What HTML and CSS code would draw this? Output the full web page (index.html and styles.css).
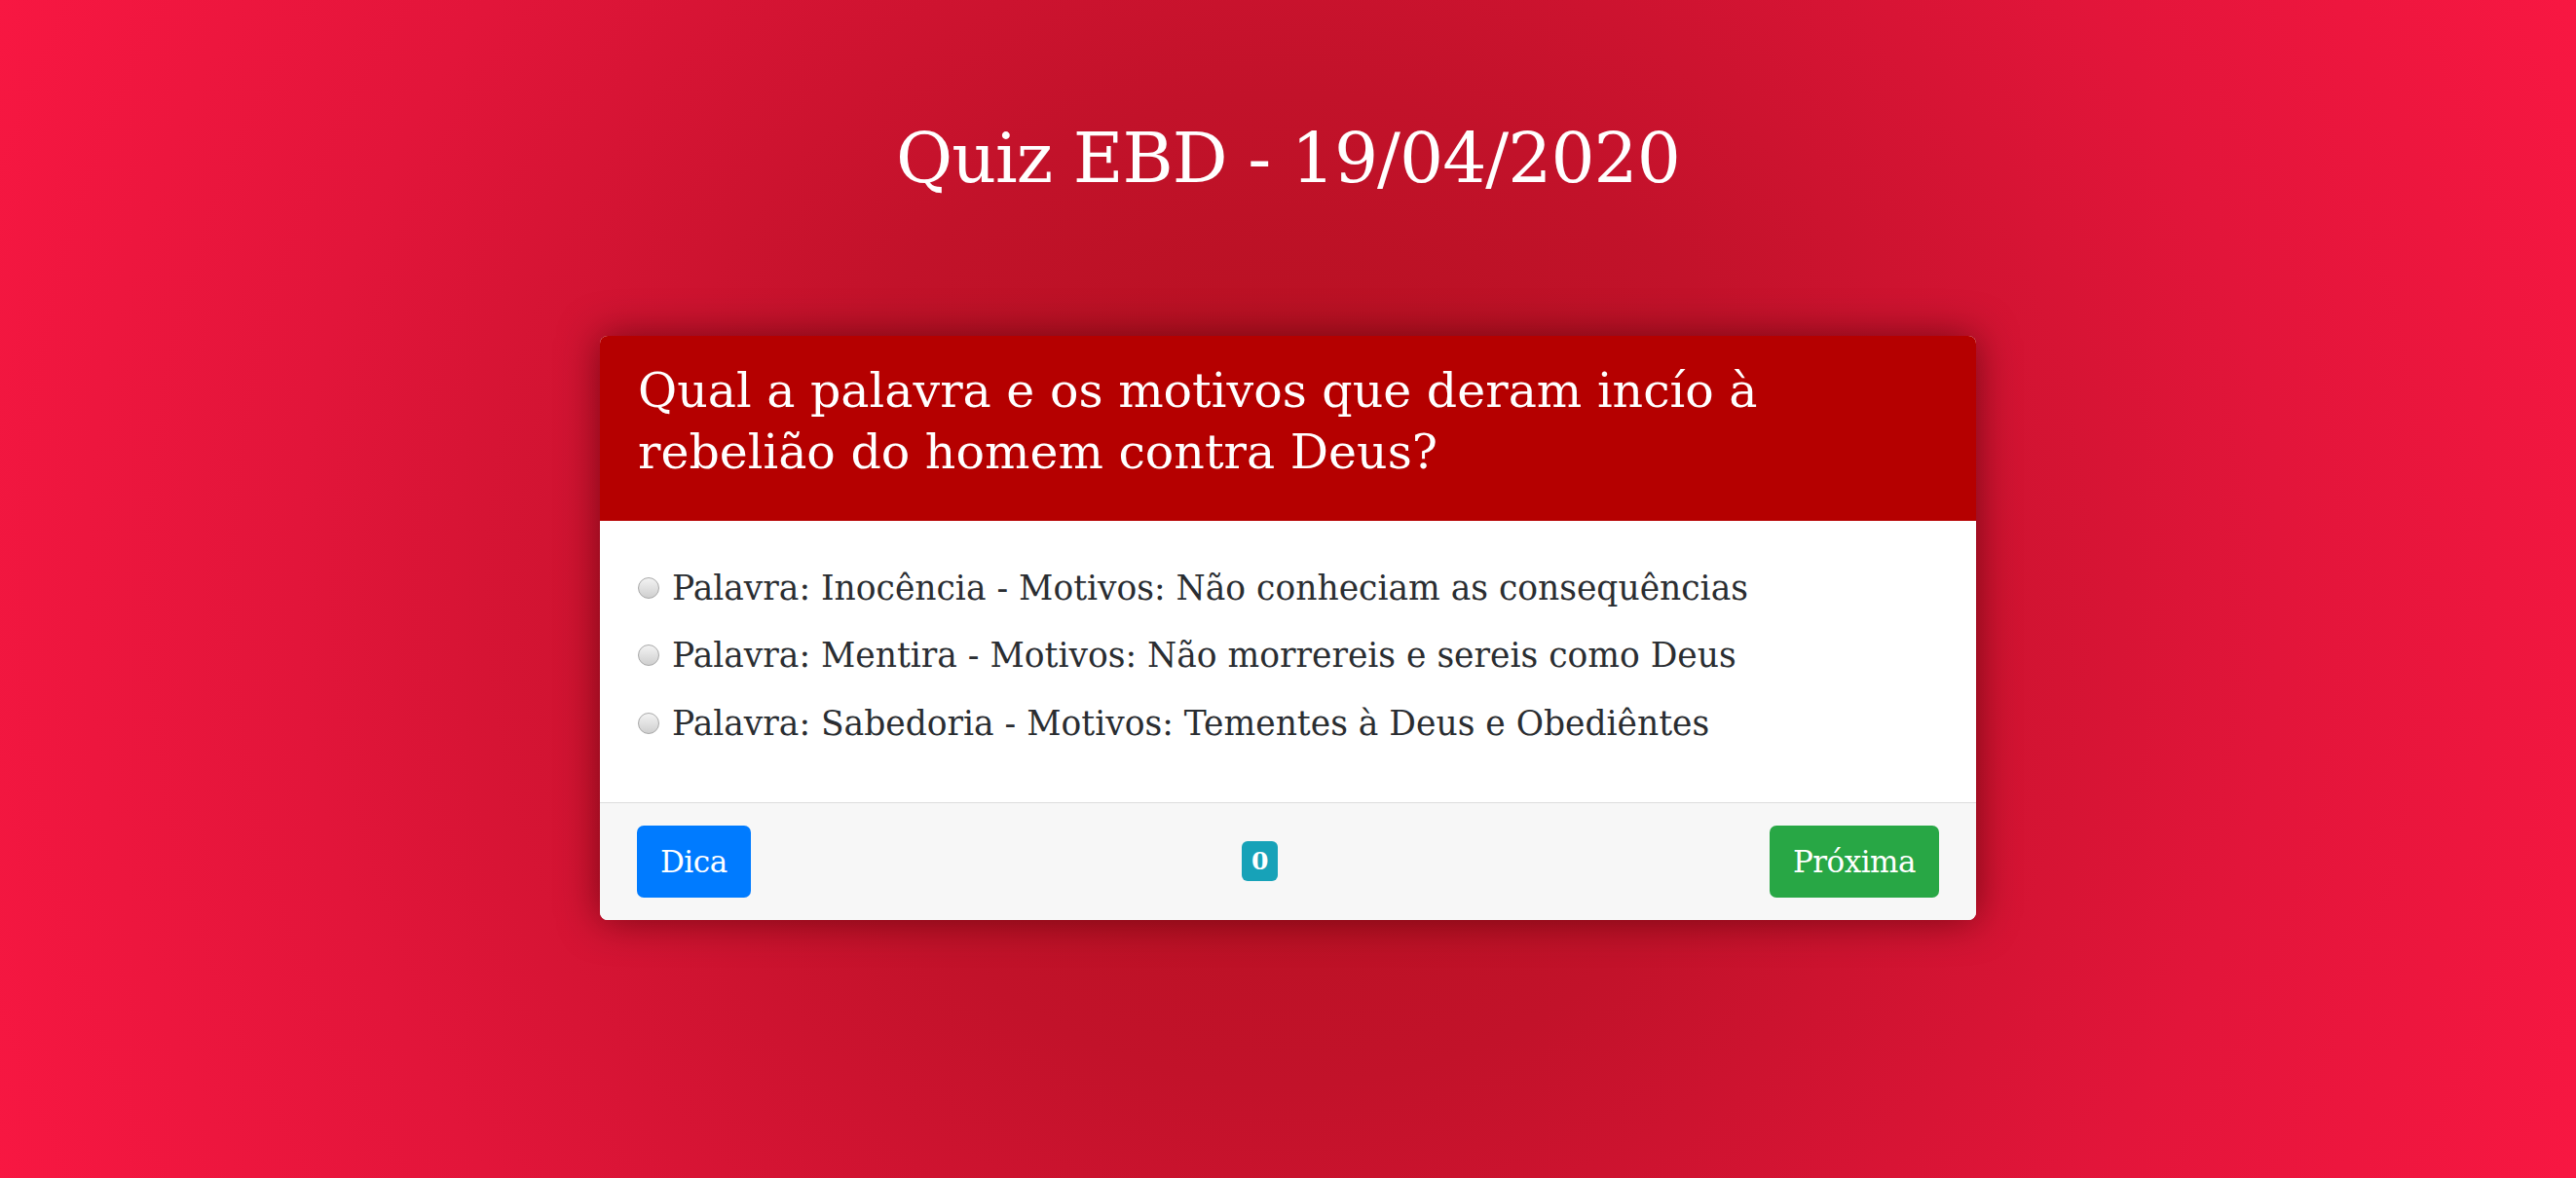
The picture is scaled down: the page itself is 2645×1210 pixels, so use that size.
FILE: index.html
```html
<!DOCTYPE html>
<html lang="pt-BR">
<head>
<meta charset="utf-8">
<title>Quiz EBD - 19/04/2020</title>
<link rel="stylesheet" href="styles.css">
</head>
<body>
<main class="page">
  <h1 class="title">Quiz EBD - 19/04/2020</h1>
  <section class="card">
    <header class="card-header">
      <h3 class="question">Qual a palavra e os motivos que deram incío à rebelião do homem contra Deus?</h3>
    </header>
    <div class="card-body">
      <label class="option"><span class="radio"></span><span class="option-text">Palavra: Inocência - Motivos: Não conheciam as consequências</span></label>
      <label class="option"><span class="radio"></span><span class="option-text">Palavra: Mentira - Motivos: Não morrereis e sereis como Deus</span></label>
      <label class="option"><span class="radio"></span><span class="option-text">Palavra: Sabedoria - Motivos: Tementes à Deus e Obediêntes</span></label>
    </div>
    <footer class="card-footer">
      <button class="btn btn-primary">Dica</button>
      <span class="badge">0</span>
      <button class="btn btn-success">Próxima</button>
    </footer>
  </section>
</main>
</body>
</html>
```

FILE: styles.css
```css
* { box-sizing: border-box; }
html, body {
  margin: 0;
  height: 100%;
}
body {
  background: radial-gradient(circle farthest-corner at 50% 50%, #b1101d 0%, #c2122a 35%, #e2153a 70%, #f81742 100%);
  font-family: "DejaVu Serif", "Liberation Serif", serif;
  color: #212529;
  overflow: hidden;
}
.page {
  display: flex;
  flex-direction: column;
  align-items: center;
  padding-top: 118px;
}
.title {
  margin: 0;
  font-size: 71px;
  font-weight: 400;
  line-height: 89px;
  color: #ffffff;
  letter-spacing: -1px;
}
.card {
  margin-top: 138px;
  width: 1413px;
  border-radius: 8px;
  background: #ffffff;
  box-shadow: 0 0 40px rgba(60, 0, 0, 0.6);
  overflow: hidden;
}
.card-header {
  background: #b50000;
  padding: 25px 39px 39px;
}
.question {
  margin: 0;
  font-size: 49px;
  font-weight: 400;
  line-height: 63px;
  color: #ffffff;
}
.card-body {
  padding: 34px 39px 46px;
  display: flex;
  flex-direction: column;
}
.option {
  display: flex;
  align-items: center;
  height: 69.5px;
  font-size: 34.5px;
  color: #2a2d31;
}
.radio {
  flex: none;
  width: 22px;
  height: 22px;
  border-radius: 50%;
  border: 1px solid #a9a9a9;
  background: linear-gradient(#f3f3f3, #cfcfcf);
  margin-right: 13px;
}
.card-footer {
  background: #f7f7f7;
  border-top: 1px solid #dcdcdc;
  padding: 23px 38px;
  display: flex;
  justify-content: space-between;
  align-items: center;
}
.btn {
  height: 74px;
  border: none;
  border-radius: 7px;
  color: #ffffff;
  font-family: "DejaVu Serif", "Liberation Serif", serif;
  font-size: 31px;
  padding: 0 24px;
  letter-spacing: -0.5px;
}
.btn-primary { background: #007bff; }
.btn-success { background: #28a745; }
.badge {
  display: inline-flex;
  align-items: center;
  justify-content: center;
  width: 37px;
  height: 41px;
  border-radius: 6px;
  background: #17a2b8;
  color: #ffffff;
  font-size: 25px;
  font-weight: 700;
}
```
